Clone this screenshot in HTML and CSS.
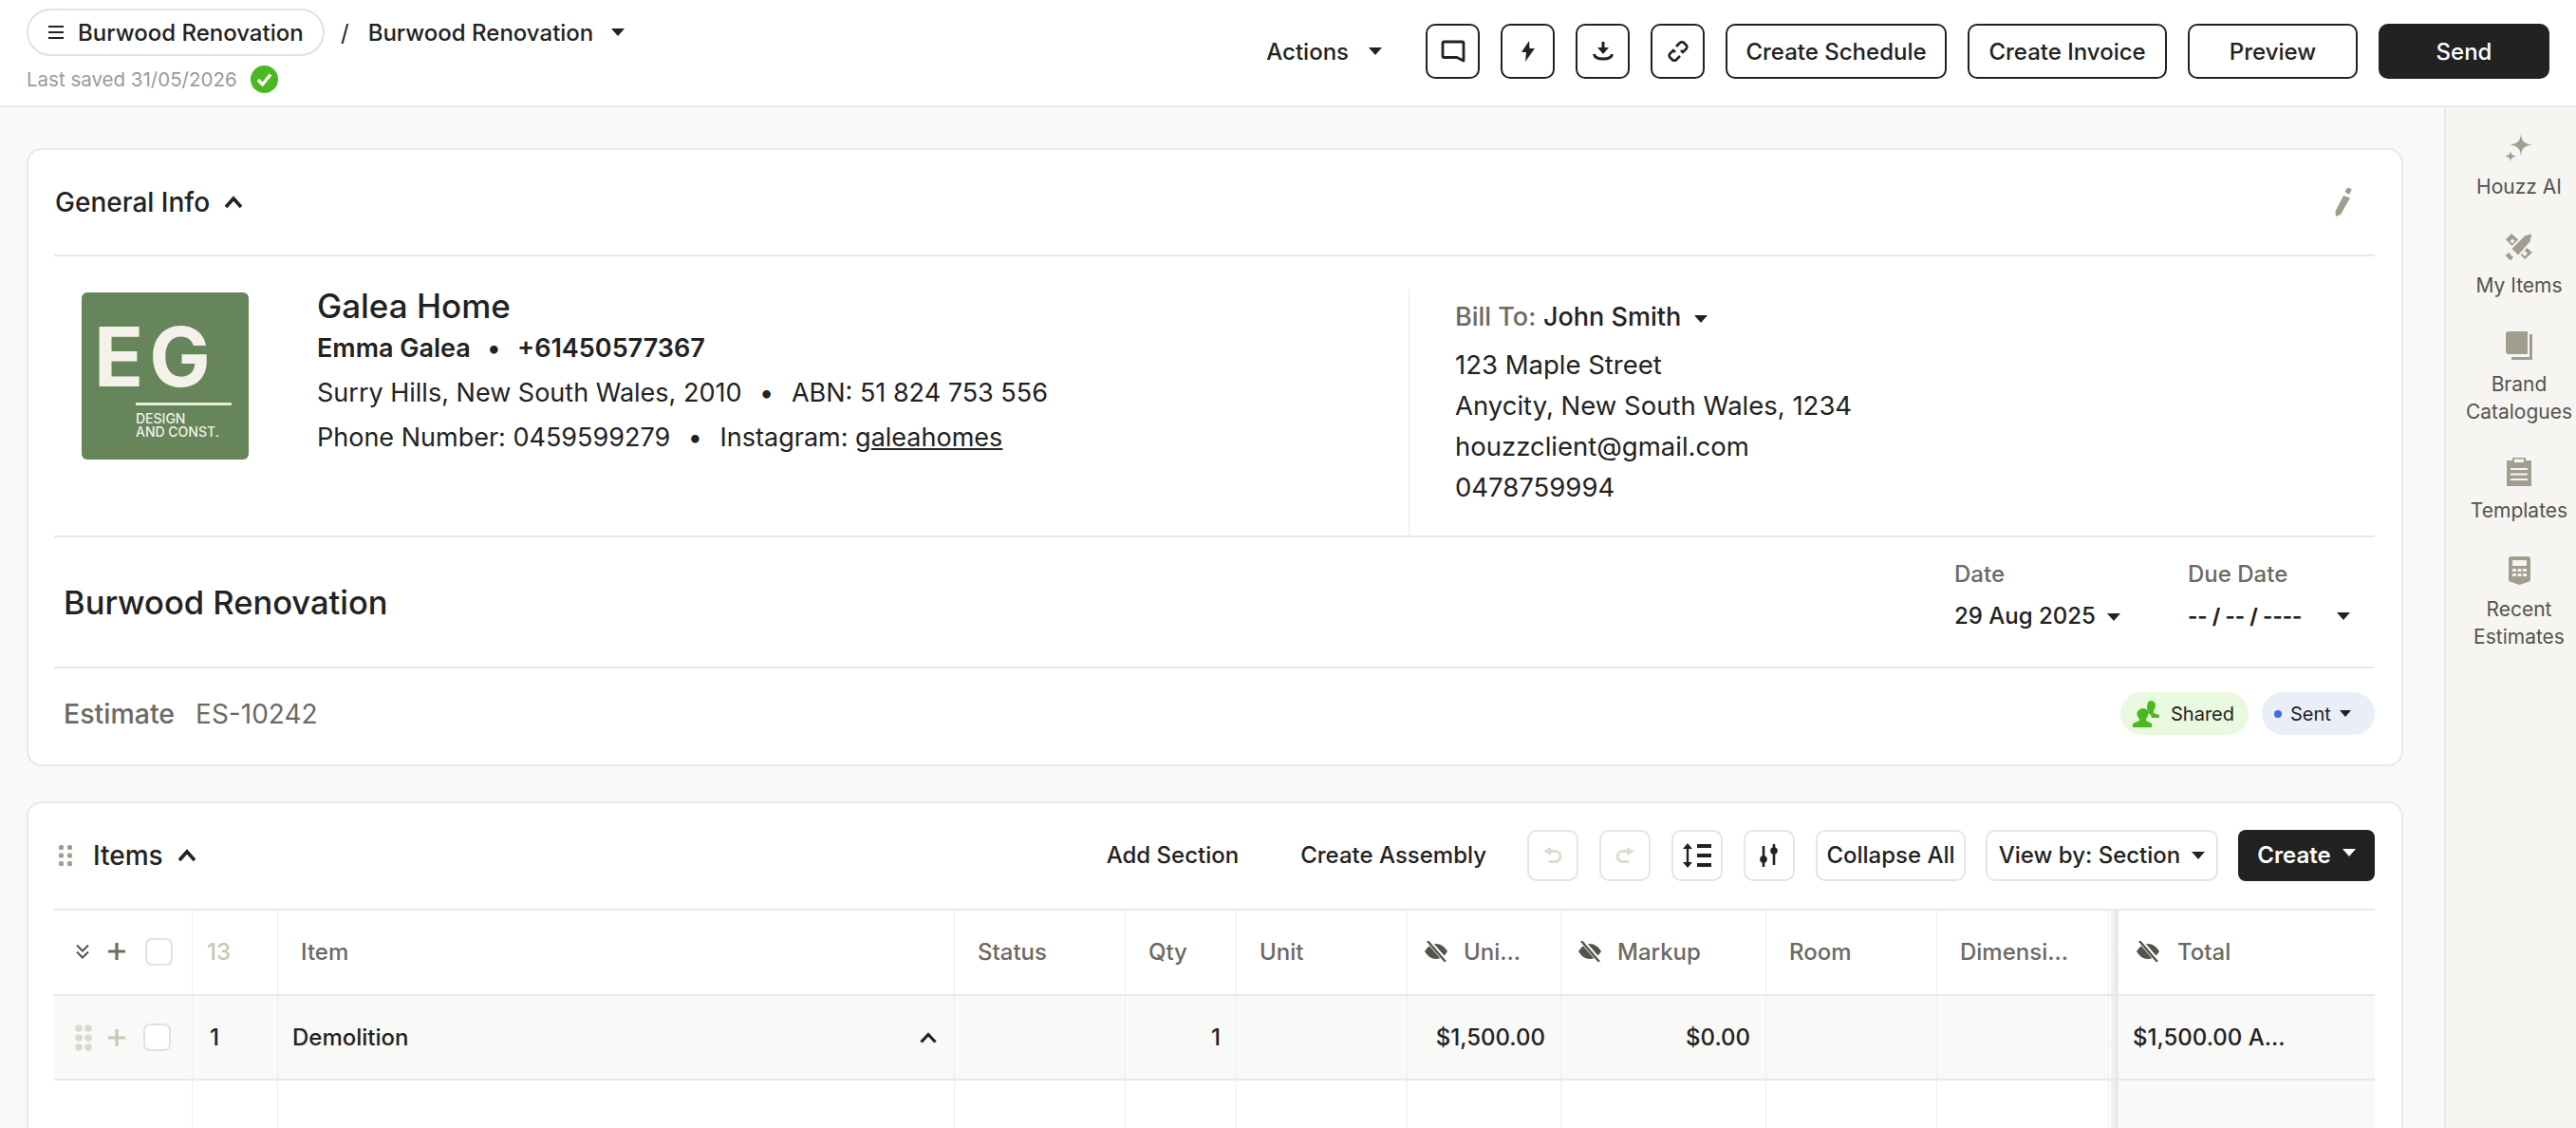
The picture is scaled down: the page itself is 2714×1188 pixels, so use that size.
FILE: index.html
```html
<!DOCTYPE html>
<html lang="en">

<head>
  <meta charset="UTF-8">
  <meta name="viewport" content="width=device-width, initial-scale=1.0">
  <title>Burwood Renovation</title>
  <link rel="stylesheet" href="styles.css">
</head>

<body>
  <header class="topbar">
    <div class="crumbs">
      <div class="crumb-row">
        <button class="pill-btn">
          <svg width="16" height="14" viewBox="0 0 16 14"><path d="M0 1h16M0 7h16M0 13h16" stroke="#222" stroke-width="2"/></svg>
          Burwood Renovation
        </button>
        <span class="slash">/</span>
        <span class="crumb-name">Burwood Renovation</span>
        <span class="caret crumb-caret"></span>
      </div>
      <div class="saved">
        Last saved 31/05/2026
        <svg width="29" height="29" viewBox="0 0 29 29"><circle cx="14.5" cy="14.5" r="14.5" fill="#4cb81f"/><path d="M8 15l4.500 5L21 9.500" fill="none" stroke="#fff" stroke-width="3.400"/></svg>
      </div>
    </div>
    <div class="top-actions">
      <button class="actions-link">Actions <span class="caret"></span></button>
      <button class="btn btn-icon"><svg width="26" height="24" viewBox="0 0 26 24"><path d="M3.500 2h19a1.500 1.500 0 0 1 1.500 1.500V22l-7-3.500H3.500A1.500 1.500 0 0 1 2 17V3.500A1.500 1.500 0 0 1 3.500 2z" fill="none" stroke="#222" stroke-width="2.800" stroke-linejoin="round"/></svg></button>
      <button class="btn btn-icon"><svg width="14" height="22" viewBox="0 0 14 22"><path d="M8 0L0 12h5l-1 10 10-14H8.500z" fill="#222"/></svg></button>
      <button class="btn btn-icon"><svg width="22" height="20" viewBox="0 0 22 20"><path d="M9.500 0h3v6H17l-6 7-6-7h4.500z" fill="#222"/><path d="M1.500 13c.5 3.500 4 5 9.500 5s9-1.500 9.500-5" fill="none" stroke="#222" stroke-width="3"/></svg></button>
      <button class="btn btn-icon"><svg width="22" height="22" viewBox="0 0 22 22"><path d="M9 6l4-4a2.800 2.800 0 0 1 4 0l2.500 2.500a2.800 2.800 0 0 1 0 4L16 12l-2-2M13 16l-4 4a2.800 2.800 0 0 1-4 0L2.500 17.500a2.800 2.800 0 0 1 0-4L6 10l2 2" fill="none" stroke="#222" stroke-width="2.600"/></svg></button>
      <button class="btn btn-schedule">Create Schedule</button>
      <button class="btn btn-invoice">Create Invoice</button>
      <button class="btn btn-preview">Preview</button>
      <button class="btn btn-send">Send</button>
    </div>
  </header>

  <div class="content">
    <main class="main">
      <section class="card">
        <div class="general-head">
          <h2 class="section-title">General Info</h2>
          <svg class="chevron" width="20" height="14" viewBox="0 0 20 14"><path d="M2 12l8-9 8 9" fill="none" stroke="#222" stroke-width="3.600"/></svg>
          <svg class="edit-icon" width="24" height="32" viewBox="0 0 24 32"><path d="M15 9l7 2.500L12 29l-5 2-.5-5.500zM16.500 5l2-3.500c.5-.8 1.500-1 2.400-.6l1.500.7c1 .5 1.300 1.500.8 2.400L21 8z" fill="#a09e8f"/></svg>
        </div>

        <div class="party">
          <div class="company">
            <div class="logo">
              <div class="logo-mark">EG</div>
              <div class="logo-sub">DESIGN<br>AND CONST.</div>
            </div>
            <div class="company-info">
              <h3 class="company-name">Galea Home</h3>
              <div class="info-line info-strong">Emma Galea <span class="dot">•</span> +61450577367</div>
              <div class="info-line">Surry Hills, New South Wales, 2010 <span class="dot">•</span> ABN: 51 824 753 556</div>
              <div class="info-line">Phone Number: 0459599279 <span class="dot">•</span> Instagram: <a href="#" class="insta">galeahomes</a></div>
            </div>
          </div>
          <div class="bill">
            <div class="bill-head"><span class="bill-label">Bill To:</span> <strong>John Smith</strong> <span class="caret"></span></div>
            <div class="bill-line">123 Maple Street</div>
            <div class="bill-line">Anycity, New South Wales, 1234</div>
            <div class="bill-line">houzzclient@gmail.com</div>
            <div class="bill-line">0478759994</div>
          </div>
        </div>

        <div class="title-row">
          <h1 class="doc-title">Burwood Renovation</h1>
          <div class="dates">
            <div class="date-col">
              <div class="date-label">Date</div>
              <div class="date-value">29 Aug 2025 <span class="caret"></span></div>
            </div>
            <div class="date-col due-col">
              <div class="date-label">Due Date</div>
              <div class="date-value due-value"><b>-- / -- / ----</b> <span class="caret"></span></div>
            </div>
          </div>
        </div>

        <div class="estimate-row">
          <div class="estimate-id"><strong>Estimate</strong><span>ES-10242</span></div>
          <div class="badges">
            <span class="badge badge-shared">
              <svg width="28" height="28" viewBox="0 0 28 28" fill="#4cb81f"><path d="M19 0c3 0 5 2 5 5 0 2-1 4-2 5v3l6 2v3h-8l-1-3-4-3c1-1 .5-3 0-4 0-5 1-8 4-8z"/><path d="M11 8c3.500 0 5.500 2.500 5.500 5.500 0 2.500-1.200 4.500-2.500 5.500v2l6 3v4H0v-4l7-3v-2c-1.300-1-2.500-3-2.500-5.500C4.500 10.500 7.500 8 11 8z"/></svg>
              Shared
            </span>
            <span class="badge badge-sent"><i class="sent-dot"></i>Sent <span class="caret caret-small"></span></span>
          </div>
        </div>
      </section>

      <section class="card items-card">
        <div class="items-head">
          <div class="items-title">
            <svg width="14" height="22" viewBox="0 0 14 22" fill="#a09e8f"><rect width="5" height="5" rx="1.500"/><rect x="9" width="5" height="5" rx="1.500"/><rect y="8.500" width="5" height="5" rx="1.500"/><rect x="9" y="8.500" width="5" height="5" rx="1.500"/><rect y="17" width="5" height="5" rx="1.500"/><rect x="9" y="17" width="5" height="5" rx="1.500"/></svg>
            <h2 class="section-title">Items</h2>
            <svg class="chevron" width="20" height="14" viewBox="0 0 20 14"><path d="M2 12l8-9 8 9" fill="none" stroke="#222" stroke-width="3.600"/></svg>
          </div>
          <div class="items-tools">
            <button class="link-btn add-section">Add Section</button>
            <button class="link-btn create-assembly">Create Assembly</button>
            <button class="tool tool-square"><svg width="20" height="18" viewBox="0 0 20 18"><path d="M8 0v9L0 4.500z" fill="#dedcd2"/><path d="M6 4.500h6.500a5.500 5.500 0 0 1 0 11H6" fill="none" stroke="#dedcd2" stroke-width="3"/></svg></button>
            <button class="tool tool-square"><svg width="20" height="18" viewBox="0 0 20 18"><path d="M12 0v9l8-4.500z" fill="#dedcd2"/><path d="M14 4.500H7.500a5.500 5.500 0 0 0 0 11H14" fill="none" stroke="#dedcd2" stroke-width="3"/></svg></button>
            <button class="tool tool-square"><svg width="30" height="26" viewBox="0 0 30 26"><path d="M5 4v18" stroke="#222" stroke-width="2.400"/><path d="M5 0l5 6H0zM5 26l5-6H0z" fill="#222"/><path d="M15 3h15M15 13h15M15 23h15" stroke="#222" stroke-width="4"/></svg></button>
            <button class="tool tool-square"><svg width="20" height="24" viewBox="0 0 20 24"><path d="M4 2v22M15 0v22" stroke="#222" stroke-width="2.600"/><circle cx="4" cy="16" r="3.800" fill="#222"/><circle cx="15" cy="7" r="3.800" fill="#222"/></svg></button>
            <button class="tool tool-collapse">Collapse All</button>
            <button class="tool tool-view">View by: Section <span class="caret"></span></button>
            <button class="tool-create">Create <span class="caret caret-white"></span></button>
          </div>
        </div>

        <div class="grid-row head-row">
          <div class="cell ctl-cell">
            <svg width="16" height="16" viewBox="0 0 16 16"><path d="M2 1.500l6 6 6-6M2 8.500l6 6 6-6" fill="none" stroke="#55534e" stroke-width="2"/></svg>
            <svg width="18" height="18" viewBox="0 0 18 18"><path d="M9 0v18M0 9h18" stroke="#6f6d63" stroke-width="3.200"/></svg>
            <span class="check"></span>
          </div>
          <div class="cell count-cell">13</div>
          <div class="cell item-head">Item</div>
          <div class="cell">Status</div>
          <div class="cell">Qty</div>
          <div class="cell">Unit</div>
          <div class="cell hidden-col">
            <svg width="24" height="22" viewBox="0 0 24 22"><use href="#eye-off"/></svg>
            Uni...
          </div>
          <div class="cell hidden-col">
            <svg width="24" height="22" viewBox="0 0 24 22"><use href="#eye-off"/></svg>
            Markup
          </div>
          <div class="cell">Room</div>
          <div class="cell">Dimensi...</div>
          <div class="cell total-cell hidden-col">
            <svg width="24" height="22" viewBox="0 0 24 22"><use href="#eye-off"/></svg>
            Total
          </div>
        </div>

        <div class="grid-row section-row">
          <div class="cell ctl-cell">
            <svg width="18" height="28" viewBox="0 0 18 28" fill="#dbd9cc"><circle cx="4" cy="4" r="3.800"/><circle cx="14" cy="4" r="3.800"/><circle cx="4" cy="14" r="3.800"/><circle cx="14" cy="14" r="3.800"/><circle cx="4" cy="24" r="3.800"/><circle cx="14" cy="24" r="3.800"/></svg>
            <svg width="18" height="18" viewBox="0 0 18 18"><path d="M9 0v18M0 9h18" stroke="#c9c7b8" stroke-width="3.200"/></svg>
            <span class="check"></span>
          </div>
          <div class="cell num-cell">1</div>
          <div class="cell name-cell">
            Demolition
            <svg width="18" height="12" viewBox="0 0 18 12"><path d="M1.500 10.500L9 2.500l7.500 8" fill="none" stroke="#222" stroke-width="3.200"/></svg>
          </div>
          <div class="cell"></div>
          <div class="cell value-right">1</div>
          <div class="cell"></div>
          <div class="cell value-right">$1,500.00</div>
          <div class="cell value-right">$0.00</div>
          <div class="cell"></div>
          <div class="cell"></div>
          <div class="cell total-cell total-value">$1,500.00 A...</div>
        </div>

        <div class="grid-row empty-row">
          <div class="cell"></div>
          <div class="cell"></div>
          <div class="cell"></div>
          <div class="cell"></div>
          <div class="cell"></div>
          <div class="cell"></div>
          <div class="cell"></div>
          <div class="cell"></div>
          <div class="cell"></div>
          <div class="cell"></div>
          <div class="cell total-cell"></div>
        </div>
      </section>
    </main>

    <aside class="sidebar">
      <a class="side-item">
        <svg width="29" height="30" viewBox="0 0 29 30" fill="#a09e8f"><path d="M17 0c1 8 3 10 12 11.500-9 1.500-11 3.500-12 11.500-1-8-3-10-12-11.500C14 10 16 8 17 0z"/><path d="M6 17.500c.5 4 1.500 5 6 6-4.500 1-5.500 2-6 6-.5-4-1.500-5-6-6 4.500-1 5.500-2 6-6z"/></svg>
        <span>Houzz AI</span>
      </a>
      <a class="side-item">
        <svg width="30" height="30" viewBox="0 0 30 30" fill="#a09e8f"><path fill-rule="evenodd" d="M7 1L1 7l20 21 8-7zM8 6.500L5.500 9l2.500 2.500L10.500 9zM21 19l-3 3 3 3 3-3z"/><path d="M29.500 0l-9 2.500L6 17l8 8L27.500 10z" stroke="#f6f5f2" stroke-width="2"/><path d="M4 21l5 5-3 3.500L.5 24z"/></svg>
        <span>My Items</span>
      </a>
      <a class="side-item">
        <svg width="28" height="30" viewBox="0 0 28 30" fill="#a09e8f"><path d="M0 3a3 3 0 0 1 3-3h20v24H3a3 3 0 0 1-3-3z"/><path d="M25 3h3v27H6v-3h19z"/></svg>
        <span>Brand<br>Catalogues</span>
      </a>
      <a class="side-item">
        <svg width="26" height="30" viewBox="0 0 26 30" fill="#a09e8f"><path d="M0 3h6V0h14v3h6v27H0z"/><path d="M8 1.500h10V5H8z" fill="#f6f5f2"/><path d="M4 11h18v2H4zM4 16.500h18v2H4zM4 22h18v2H4z" fill="#f6f5f2"/></svg>
        <span>Templates</span>
      </a>
      <a class="side-item">
        <svg width="23" height="30" viewBox="0 0 23 30" fill="#a09e8f"><path d="M3 0h17a3 3 0 0 1 3 3v22a3 3 0 0 1-3 2l-8.500 3L3 27a3 3 0 0 1-3-2V3a3 3 0 0 1 3-3z"/><path d="M4 4h15v6H4zM4 13h4v3H4zM9.500 13h4v3h-4zM15 13h4v3h-4zM4 18h4v3H4zM9.500 18h4v3h-4zM15 18h4v3h-4z" fill="#f6f5f2"/></svg>
        <span>Recent<br>Estimates</span>
      </a>
    </aside>
  </div>

  <svg class="defs" width="0" height="0">
    <symbol id="eye-off" viewBox="0 0 24 22">
      <path d="M0 11c3-5 7-8 12-8s9 3 12 8c-3 5-7 8-12 8S3 16 0 11z" fill="#55534e"/>
      <path d="M3 -1l19 22" stroke="#fff" stroke-width="5"/>
      <path d="M3 0l19 22" stroke="#55534e" stroke-width="2.400"/>
    </symbol>
  </svg>
</body>

</html>
```

FILE: styles.css
```css
:root {
  --line: #e9e8e4;
  --ink: #222222;
  --muted: #6b6963;
  --page: #f9f9f7;
}

* {
  margin: 0;
  padding: 0;
  box-sizing: border-box;
  font-family: Inter, "Noto Sans", sans-serif;
}

body {
  height: 100vh;
  overflow: hidden;
  color: var(--ink);
  background: var(--page);
  display: flex;
  flex-direction: column;
}

button {
  background: none;
  border: none;
  color: inherit;
  font-size: 24px;
  font-weight: 500;
}

.defs {
  position: absolute;
}

.caret {
  display: inline-block;
  width: 0;
  height: 0;
  border-left: 7px solid transparent;
  border-right: 7px solid transparent;
  border-top: 8px solid var(--ink);
  vertical-align: middle;
}

.caret-small {
  border-left-width: 6px;
  border-right-width: 6px;
  border-top-width: 7px;
}

.caret-white {
  border-top-color: #fff;
  margin-bottom: 6px;
}

/* top bar */
.topbar {
  height: 113px;
  flex-shrink: 0;
  background: #fff;
  border-bottom: 2px solid var(--line);
  display: flex;
  justify-content: space-between;
  padding: 9px 28px 0 28px;
}

.crumb-row {
  display: flex;
  align-items: center;
}

.pill-btn {
  width: 314px;
  height: 50px;
  border: 2px solid #e3e2da;
  border-radius: 25px;
  display: flex;
  align-items: center;
  gap: 15px;
  padding-left: 21px;
  white-space: nowrap;
}

.slash {
  font-size: 24px;
  margin: 0 20px 0 17px;
}

.crumb-name {
  font-size: 24px;
  font-weight: 500;
  white-space: nowrap;
}

.crumb-caret {
  margin-left: 19px;
}

.saved {
  display: flex;
  align-items: center;
  gap: 14px;
  margin-top: 10px;
  font-size: 20.500px;
  color: #9d9b90;
}

.top-actions {
  display: flex;
  align-items: center;
  height: 58px;
  margin-top: 16px;
}

.actions-link {
  margin-right: 46px;
  display: flex;
  align-items: center;
  gap: 21px;
}

.btn {
  height: 58px;
  border: 2px solid var(--ink);
  border-radius: 10px;
  display: flex;
  align-items: center;
  justify-content: center;
  flex-shrink: 0;
}

.btn-icon {
  width: 57px;
  margin-right: 22px;
}

.btn-schedule {
  width: 233px;
  margin-right: 22px;
}

.btn-invoice {
  width: 210px;
  margin-right: 22px;
}

.btn-preview {
  width: 179px;
  margin-right: 22px;
}

.btn-send {
  width: 180px;
  background: var(--ink);
  color: #fff;
}

/* page body */
.content {
  flex: 1;
  min-height: 0;
  display: flex;
}

.main {
  flex: 1;
  min-width: 0;
  padding: 43px 43px 0 28px;
  display: flex;
  flex-direction: column;
  gap: 37px;
}

.card {
  background: #fff;
  border: 2px solid var(--line);
  border-radius: 16px;
  padding: 0 28px 0 27px;
  flex-shrink: 0;
}

.items-card {
  border-bottom: none;
  border-radius: 16px 16px 0 0;
  flex: 1;
  display: flex;
  flex-direction: column;
}

.sidebar {
  width: 139px;
  flex-shrink: 0;
  background: #f6f5f2;
  border-left: 2px solid var(--line);
  padding: 28px 0 0 17px;
  display: flex;
  flex-direction: column;
  align-items: center;
}

.side-item {
  display: flex;
  flex-direction: column;
  align-items: center;
  text-align: center;
  font-size: 21px;
  line-height: 29px;
  color: #55534e;
  margin-bottom: 34px;
}

.side-item svg {
  margin-bottom: 11px;
}

/* general info */
.general-head {
  height: 112px;
  border-bottom: 2px solid var(--line);
  display: flex;
  align-items: center;
}

.section-title {
  font-size: 28px;
  font-weight: 500;
}

.general-head .section-title {
  margin-left: 1px;
}

.chevron {
  margin-left: 15px;
}

.edit-icon {
  margin-left: auto;
  margin-right: 24px;
}

.party {
  height: 296px;
  display: flex;
  border-bottom: 2px solid var(--line);
}

.company {
  width: 1427px;
  display: flex;
  padding: 38px 0 0 29px;
}

.logo {
  width: 176px;
  height: 176px;
  background: #66855a;
  border-radius: 6px;
  color: #f3f1ea;
  padding: 26px 0 0 13px;
}

.logo-mark {
  font-size: 86px;
  line-height: 84px;
  font-weight: 700;
  letter-spacing: 6px;
}

.logo-sub {
  margin: 6px 0 0 44px;
  padding-top: 7px;
  width: 101px;
  border-top: 3px solid #e4eedb;
  font-size: 14px;
  line-height: 14px;
  font-weight: 500;
  white-space: nowrap;
}

.company-info {
  margin: -7px 0 0 72px;
}

.company-name {
  font-size: 35px;
  line-height: 42px;
  font-weight: 500;
}

.info-line {
  font-size: 27px;
  line-height: 47px;
  white-space: nowrap;
}

.info-strong {
  font-weight: 600;
}

.dot {
  margin: 0 11px;
}

.insta {
  color: inherit;
}

.bill {
  flex: 1;
  margin-top: 34px;
  border-left: 1px solid var(--line);
  padding: 8px 0 0 48px;
}

.bill-head {
  font-size: 27px;
  line-height: 44px;
  margin-bottom: 7px;
}

.bill-head strong {
  font-weight: 500;
}

.bill-label {
  color: var(--muted);
  font-weight: 500;
}

.bill-head .caret {
  margin-left: 6px;
}

.bill-line {
  font-size: 27.500px;
  line-height: 43px;
}

.title-row {
  height: 138px;
  border-bottom: 2px solid var(--line);
  display: flex;
  align-items: center;
  justify-content: space-between;
  padding-left: 10px;
}

.doc-title {
  font-size: 34.500px;
  font-weight: 500;
}

.dates {
  display: flex;
  margin-bottom: 14px;
}

.date-col {
  width: 246px;
}

.due-col {
  width: 197px;
}

.date-label {
  font-size: 24px;
  line-height: 44px;
  font-weight: 500;
  color: var(--muted);
}

.date-value {
  font-size: 24px;
  line-height: 44px;
  font-weight: 500;
}

.date-value .caret {
  margin-left: 6px;
}

.due-value {
  display: flex;
  align-items: center;
  justify-content: space-between;
  padding-right: 26px;
}

.due-value b {
  font-weight: 700;
  font-size: 22px;
}

.estimate-row {
  height: 101px;
  display: flex;
  align-items: center;
  justify-content: space-between;
  padding: 0 0 6px 10px;
}

.estimate-id {
  display: flex;
  align-items: center;
  gap: 22px;
  font-size: 28px;
  color: var(--muted);
}

.estimate-id strong {
  font-size: 28.500px;
  font-weight: 500;
}

.badges {
  display: flex;
  gap: 14px;
}

.badge {
  height: 45px;
  border-radius: 23px;
  display: flex;
  align-items: center;
  font-size: 20px;
}

.badge-shared {
  width: 135px;
  background: #e9f9df;
  padding-left: 13px;
  gap: 12px;
}

.badge-sent {
  width: 119px;
  background: #e9eef9;
  padding-left: 13px;
  gap: 9px;
}

.sent-dot {
  width: 8px;
  height: 8px;
  border-radius: 50%;
  background: #3f6fe0;
}

/* items */
.items-head {
  height: 111px;
  padding-bottom: 2px;
  display: flex;
  align-items: center;
  justify-content: space-between;
  flex-shrink: 0;
}

.items-title {
  display: flex;
  align-items: center;
  margin-left: 5px;
}

.items-title .section-title {
  margin-left: 22px;
}

.items-tools {
  display: flex;
  align-items: center;
}

.link-btn {
  white-space: nowrap;
}

.add-section {
  margin-right: 65px;
}

.create-assembly {
  margin-right: 43px;
}

.tool {
  height: 54px;
  border: 2px solid #e6e5df;
  border-radius: 10px;
  margin-right: 22px;
  display: flex;
  align-items: center;
  justify-content: center;
  white-space: nowrap;
}

.tool-square {
  width: 54px;
}

.tool-collapse {
  width: 158px;
  margin-right: 21px;
}

.tool-view {
  width: 245px;
  margin-right: 21px;
  gap: 12px;
}

.tool-create {
  width: 144px;
  height: 54px;
  border-radius: 8px;
  background: var(--ink);
  color: #fff;
  white-space: nowrap;
  display: flex;
  align-items: center;
  justify-content: center;
  gap: 12px;
  font-weight: 600;
}

.grid-row {
  display: grid;
  grid-template-columns: 145px 90px 713px 180px 117px 180px 162px 216px 180px 181px 281px;
  border-top: 2px solid var(--line);
  font-size: 24px;
}

.head-row {
  height: 90px;
  color: var(--muted);
  font-weight: 500;
}

.head-row .cell {
  padding-bottom: 2px;
}

.section-row {
  height: 89px;
  background: var(--page);
  font-weight: 500;
  color: var(--ink);
}

.empty-row {
  flex: 1;
}

.cell {
  border-left: 1px solid #f0efeb;
  padding: 0 24px;
  display: flex;
  align-items: center;
  min-width: 0;
  white-space: nowrap;
}

.cell:first-child {
  border-left: none;
}

.ctl-cell {
  padding: 0 0 0 22px;
  gap: 19px;
}

.head-row .ctl-cell {
  gap: 21px;
}

.ctl-cell svg:first-child {
  margin-right: -2px;
}

.check {
  width: 29px;
  height: 29px;
  border: 2px solid #e3e2da;
  border-radius: 7px;
  background: #fff;
}

.count-cell {
  color: #c8c6bb;
  padding-left: 15px;
}

.num-cell {
  padding-left: 18px;
}

.item-head {
  padding-left: 24px;
}

.name-cell {
  padding: 0 18px 0 15px;
  justify-content: space-between;
}

.hidden-col {
  padding-left: 18px;
  gap: 17px;
}

.value-right {
  justify-content: flex-end;
  padding-right: 16px;
}

/* the frozen last column, with its scroll shadow as a band on the left */
.total-cell {
  --cell-bg: #fff;
  border-left: 1px solid #eeeeeb;
  background: linear-gradient(to right, #fff 1px, #f4f4f2 2px, #e6e6e4 10px, var(--cell-bg) 10px);
  padding-left: 29px;
  gap: 19px;
}

.section-row .total-cell,
.empty-row .total-cell {
  --cell-bg: var(--page);
}

.total-value {
  padding-left: 25px;
}
```
